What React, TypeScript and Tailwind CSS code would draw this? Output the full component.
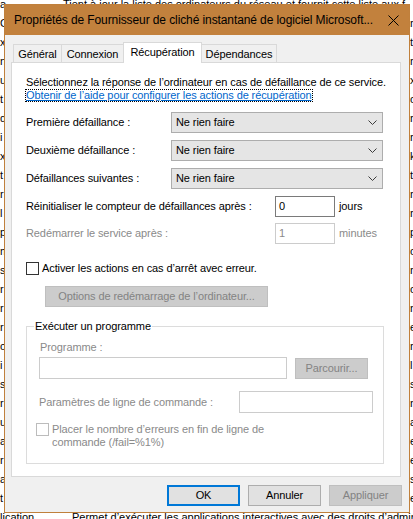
import React from 'react';

const bgRows: [string, string][] = [
  ['C', 'r'],
  ['x', 't'],
  ['n', 'r'],
  ['u', 'x'],
  ['t', 'o'],
  ['d', 'r'],
  ['i', 'r'],
  ['x', 'k'],
  ['t', 't'],
  ['r', 'r'],
  ['l', 'r'],
  ['p', 'p'],
  ['m', 'o'],
  ['s', 'r'],
  ['r', 'o'],
  ['r', 'n'],
  ['r', 'e'],
  ['o', 'r'],
  ['i', 'l'],
  ['s', 's'],
  ['r', 'n'],
  ['u', 'a'],
  ['a', 'e'],
  ['r', 'e'],
  ['a', 's'],
  ['t', 'e'],
];

function Background() {
  return (
    <div className="-mt-[5px] flex flex-col text-[11px] text-black">
      <div className="flex h-[19px] items-center overflow-hidden whitespace-nowrap leading-[19px]">
        <span className="w-[63px] shrink-0">a</span>
        <span>Tient à jour la liste des ordinateurs du réseau et fournit cette liste aux f</span>
      </div>
      {bgRows.map(([l, r], i) => (
        <div key={i} className="flex h-[19px] items-center leading-[19px]">
          <span className="w-[410px] shrink-0">{l}</span>
          <span>{r}</span>
        </div>
      ))}
      <div className="flex h-[19px] items-center whitespace-nowrap leading-[19px]">
        <span className="w-[72px] shrink-0">lication</span>
        <span>Permet d’exécuter les applications interactives avec des droits d’administration</span>
      </div>
    </div>
  );
}

function Chevron() {
  return (
    <svg width="9" height="5" viewBox="0 0 9 5" className="shrink-0">
      <polyline points="0.5,0.5 4.5,4.5 8.5,0.5" fill="none" stroke="#3c3c3c" strokeWidth="1" />
    </svg>
  );
}

function Combo({ label }: { label: string }) {
  return (
    <div className="flex h-[21px] items-center">
      <span className="w-[145px] shrink-0">{label}</span>
      <div className="flex h-[21px] w-[212px] items-center justify-between border border-[#adadad] bg-[#e5e5e5] pl-[4px] pr-[5px]">
        <span>Ne rien faire</span>
        <Chevron />
      </div>
    </div>
  );
}

export default function App() {
  return (
    <div className="relative h-[519px] w-[413px] overflow-hidden bg-white font-['Liberation_Sans',Arial,sans-serif] text-[11px] text-black">
      <Background />

      <div className="absolute left-[4px] top-[4px] flex h-[509px] w-[406px] flex-col border border-[#c0803c] bg-[#f0f0f0] tracking-[-0.1px]">
        {/* title bar */}
        <div className="flex h-[30px] shrink-0 items-center justify-between bg-[#c2813d] pl-[9px] pr-[10px]">
          <span className="whitespace-nowrap text-[12px]">Propriétés de Fournisseur de cliché instantané de logiciel Microsoft...</span>
          <svg width="11" height="11" viewBox="0 0 11 11">
            <path d="M0.5 0.5 L10.5 10.5 M10.5 0.5 L0.5 10.5" stroke="#000" strokeWidth="1" />
          </svg>
        </div>

        <div className="flex flex-col pl-[6px] pt-[7px]">
          {/* tabs */}
          <div className="ml-[2px] flex h-[21px] items-end">
            <div className="flex h-[19px] w-[48px] items-center justify-center border-l border-t border-[#d9d9d9] bg-[#f0f0f0]">Général</div>
            <div className="flex h-[19px] w-[62px] items-center justify-center border-l border-t border-[#d9d9d9] bg-[#f0f0f0]">Connexion</div>
            <div className="relative z-10 flex h-[21px] w-[79px] items-center justify-center border-l border-r border-t border-[#d9d9d9] bg-white pb-[2px]">Récupération</div>
            <div className="flex h-[19px] w-[75px] items-center justify-center border-r border-t border-[#d9d9d9] bg-[#f0f0f0]">Dépendances</div>
          </div>

          {/* panel */}
          <div className="-mt-px flex h-[415px] w-[390px] flex-col border border-[#d9d9d9] bg-white px-[14px]">
            <div className="mt-[12px] h-[15px] whitespace-nowrap leading-[15px]">
              Sélectionnez la réponse de l’ordinateur en cas de défaillance de ce service.
            </div>
            <div className="-mt-px flex h-[13px]">
              <span className="-ml-px border border-dotted border-black leading-[11px] text-[#0066cc] underline">
                Obtenir de l’aide pour configurer les actions de récupération
              </span>
            </div>

            <div className="mt-[10px]">
              <Combo label="Première défaillance :" />
            </div>
            <div className="mt-[7px]">
              <Combo label="Deuxième défaillance :" />
            </div>
            <div className="mt-[7px]">
              <Combo label="Défaillances suivantes :" />
            </div>

            <div className="mt-[7px] flex h-[21px] items-center">
              <span className="w-[249px] shrink-0">Réinitialiser le compteur de défaillances après :</span>
              <div className="flex h-[21px] w-[60px] items-center border border-[#7a7a7a] bg-white pl-[3px]">0</div>
              <span className="ml-[4px]">jours</span>
            </div>
            <div className="mt-[6px] flex h-[21px] items-center text-[#8a8a8a]">
              <span className="w-[249px] shrink-0">Redémarrer le service après :</span>
              <div className="flex h-[21px] w-[60px] items-center border border-[#cccccc] bg-white pl-[3px]">1</div>
              <span className="ml-[4px]">minutes</span>
            </div>

            <div className="mt-[18px] flex h-[13px] items-center">
              <div className="h-[13px] w-[13px] shrink-0 border border-[#333333] bg-white" />
              <span className="ml-[3px]">Activer les actions en cas d’arrêt avec erreur.</span>
            </div>

            <div className="ml-[19px] mt-[11px] flex h-[21px] w-[223px] items-center justify-center border border-[#bfbfbf] bg-[#cccccc] text-[#838383]">
              Options de redémarrage de l’ordinateur...
            </div>

            <fieldset className="mt-[12px] w-[358px] border border-[#dcdcdc] pb-[14px]">
              <legend className="ml-[7px] px-[1px] leading-[14px]">Exécuter un programme</legend>
              <div className="flex flex-col pl-[12px] text-[#8a8a8a]">
                <div className="ml-px mt-[7px] h-[14px] leading-[14px]">Programme :</div>
                <div className="mt-[3px] flex h-[22px] items-start">
                  <div className="h-[22px] w-[248px] border border-[#cccccc] bg-white" />
                  <div className="ml-[8px] mt-px flex h-[21px] w-[73px] items-center justify-center border border-[#bfbfbf] bg-[#cccccc] text-[#838383]">
                    Parcourir...
                  </div>
                </div>
                <div className="mt-[12px] flex h-[22px] items-center">
                  <span className="w-[200px] shrink-0">Paramètres de ligne de commande :</span>
                  <div className="h-[22px] w-[134px] border border-[#cccccc] bg-white" />
                </div>
                <div className="-ml-[3px] mt-[10px] flex items-start">
                  <div className="h-[13px] w-[13px] shrink-0 border border-[#bcbcbc] bg-white" />
                  <span className="ml-[3px] leading-[13px]">
                    Placer le nombre d’erreurs en fin de ligne de
                    <br />
                    commande (/fail=%1%)
                  </span>
                </div>
              </div>
            </fieldset>
          </div>

          {/* buttons */}
          <div className="mt-[8px] flex w-[391px] justify-end gap-[8px]">
            <div className="flex h-[21px] w-[73px] items-center justify-center border-2 border-[#0078d7] bg-[#e1e1e1]">OK</div>
            <div className="flex h-[21px] w-[73px] items-center justify-center border border-[#adadad] bg-[#e1e1e1]">Annuler</div>
            <div className="flex h-[21px] w-[73px] items-center justify-center border border-[#bfbfbf] bg-[#cccccc] text-[#838383]">Appliquer</div>
          </div>
        </div>
      </div>
    </div>
  );
}
